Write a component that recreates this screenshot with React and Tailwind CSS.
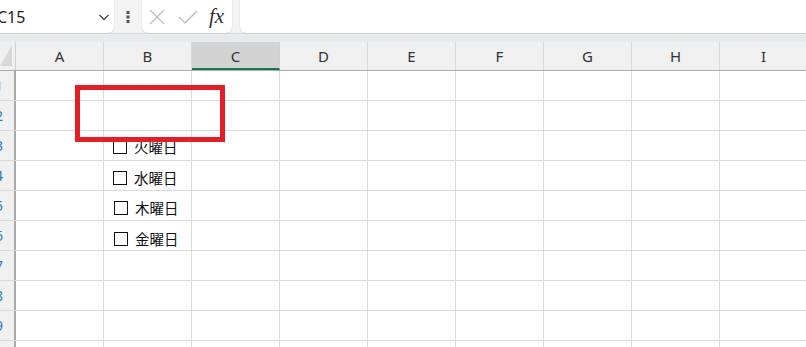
import React from "react";

const cols = ["A", "B", "C", "D", "E", "F", "G", "H", "I"];
const rows = [1, 2, 3, 4, 5, 6, 7, 8, 9, 10];

const checks = [
  { label: "火曜日", top: 140, left: 113 },
  { label: "水曜日", top: 171, left: 113 },
  { label: "木曜日", top: 201, left: 114 },
  { label: "金曜日", top: 232, left: 114 },
];

export default function App() {
  return (
    <div
      className="relative w-[806px] h-[347px] overflow-hidden bg-white"
      style={{ fontFamily: '"Noto Sans", "Noto Sans CJK JP", sans-serif' }}
    >
      {/* formula bar */}
      <div className="flex h-[33px] bg-[#f3f3f3]">
        <div className="flex w-[114px] shrink-0 items-center justify-between rounded-br-md bg-white pr-[3px] shadow-[0_0_1px_rgba(0,0,0,0.35)]">
          <span className="ml-[-3px] text-[16px] text-[#222]">C15</span>
          <svg width="14" height="14" viewBox="0 0 14 14" className="mt-[1px]">
            <path d="M2.5 5 L7 9.5 L11.5 5" fill="none" stroke="#444" strokeWidth="1.3" />
          </svg>
        </div>
        <div className="flex w-[28px] shrink-0 items-center justify-center">
          <svg width="4" height="14" viewBox="0 0 4 14">
            <rect x="0.5" y="1" width="3" height="3" fill="#555" />
            <rect x="0.5" y="5.5" width="3" height="3" fill="#555" />
            <rect x="0.5" y="10" width="3" height="3" fill="#555" />
          </svg>
        </div>
        <div className="flex w-[90px] shrink-0 items-center rounded-b-md bg-white shadow-[0_0_1px_rgba(0,0,0,0.35)]">
          <svg width="18" height="18" viewBox="0 0 18 18" className="ml-[6px]">
            <path d="M2 2 L16 16 M16 2 L2 16" stroke="#b9bec4" strokeWidth="1.3" />
          </svg>
          <svg width="22" height="18" viewBox="0 0 22 18" className="ml-[11px]">
            <path d="M2 9 L8 15 L20 3" fill="none" stroke="#b9bec4" strokeWidth="1.3" />
          </svg>
          <span
            className="ml-[10px] text-[21px] leading-none italic text-[#333]"
            style={{ fontFamily: '"Liberation Serif", serif' }}
          >
            fx
          </span>
        </div>
        <div className="ml-[8px] flex-1 rounded-bl-md bg-white shadow-[0_0_1px_rgba(0,0,0,0.35)]" />
      </div>

      {/* band */}
      <div className="h-[9px] border-t border-[#d6d9dc] bg-[#e8ebed]" />

      {/* column headers */}
      <div className="flex h-[29px] border-b border-[#ababab] bg-[#f0f0f0]">
        <div className="relative w-[16px] shrink-0 border-r border-[#d0d0d0]">
          <svg width="14" height="24" viewBox="0 0 14 24" className="absolute left-0 top-[1px]">
            <path d="M0 23 L12 23 L12 2 Z" fill="#d8d8d8" />
          </svg>
        </div>
        {cols.map((c) => (
          <div
            key={c}
            className={
              c === "C"
                ? "flex w-[88px] shrink-0 items-center justify-center border-r border-[#d0d0d0] border-b-2 border-b-[#217346] bg-[#d3d3d3] pt-[2px] text-[15px] text-[#333]"
                : "flex w-[88px] shrink-0 items-center justify-center border-r border-[#d8d8d8] text-[15px] text-[#333]"
            }
          >
            {c}
          </div>
        ))}
      </div>

      {/* grid rows */}
      {rows.map((r) => (
        <div key={r} className="flex h-[30px] border-b border-[#dadada]">
          <div className="w-[16px] shrink-0 overflow-hidden border-r-2 border-[#a8a8a8] bg-[#f0f0f0]">
            <div className="ml-[-17px] flex h-full w-[32px] items-center justify-center text-[14px] text-[#2b79c2]">
              {r}
            </div>
          </div>
          {cols.map((c) => (
            <div key={c} className="w-[88px] shrink-0 border-r border-[#dadada]" />
          ))}
        </div>
      ))}

      {/* checkbox form controls */}
      {checks.map((ch) => (
        <div
          key={ch.label}
          className="absolute flex items-center"
          style={{ top: ch.top, left: ch.left }}
        >
          <div className="h-[14px] w-[14px] border border-[#111] bg-white" />
          <span
            className="ml-[7px] text-[14.5px] leading-[14px] text-[#111]"
            style={{ fontFamily: '"Noto Sans CJK JP", sans-serif' }}
          >
            {ch.label}
          </span>
        </div>
      ))}

      {/* red highlight rectangle */}
      <div className="absolute left-[75px] top-[85px] h-[57px] w-[150px] border-[5px] border-[#e31e24]" />
    </div>
  );
}
